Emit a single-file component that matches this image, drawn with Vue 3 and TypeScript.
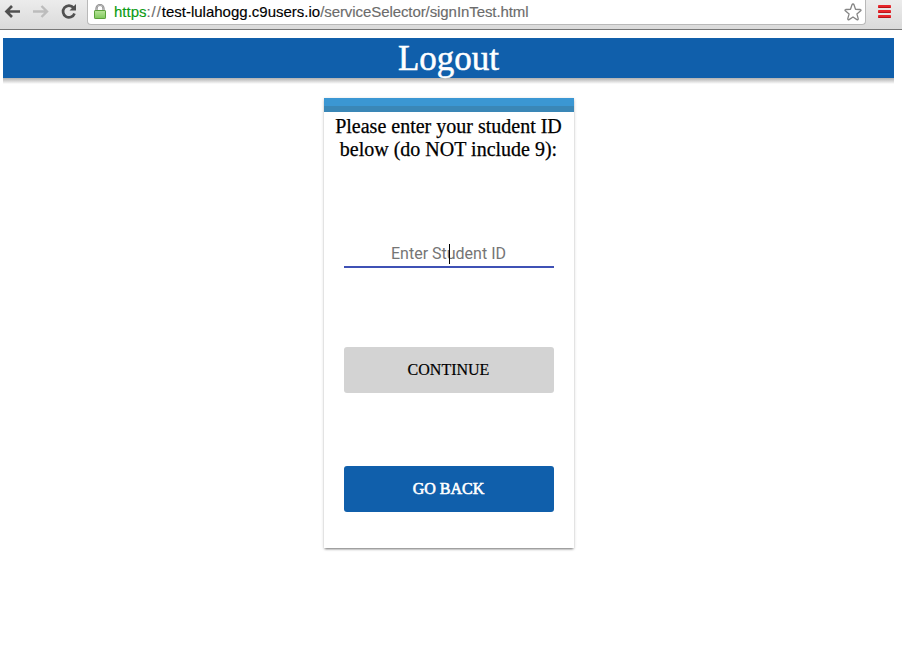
<script setup lang="ts">
import { ref } from 'vue'

const prompt = ['Please enter your student ID', 'below (do NOT include 9):']
const placeholder = ref<string>('Enter Student ID')
</script>

<template>
  <div class="window">
    <div class="toolbar">
      <svg class="nav" width="86" height="29" viewBox="0 0 86 29" fill="none">
        <path d="M20 11.5H7M12 6L6.5 11.5L12 17" stroke="#505050" stroke-width="2.7" />
        <path d="M33 11.5H46.500M41.500 6L47 11.500L41.500 17" stroke="#bcbcbc" stroke-width="2.4" />
        <path d="M73.500 7.700A5.900 5.900 0 1 0 74.500 13.500" stroke="#505050" stroke-width="2.7" />
        <path d="M76 4V10.500H69.500Z" fill="#505050" />
      </svg>
      <div class="address">
        <svg class="lock" width="14" height="18" viewBox="0 0 14 18">
          <defs>
            <linearGradient id="lockFill" x1="0" y1="0" x2="0" y2="1">
              <stop offset="0" stop-color="#b9e49a" />
              <stop offset="1" stop-color="#7fc95c" />
            </linearGradient>
          </defs>
          <path d="M3.500 9V5.500a3.500 3.500 0 0 1 7 0V9" fill="none" stroke="#858585" stroke-width="2.200" />
          <path d="M3.500 9V5.500a3.500 3.500 0 0 1 7 0V9" fill="none" stroke="#d0d0d0" stroke-width=".7" />
          <rect x="1.500" y="7.500" width="11" height="8" rx=".6" fill="url(#lockFill)" stroke="#5aa13a" />
        </svg>
        <span class="url"><span class="scheme">https</span><span class="separator">://</span><span class="host">test-lulahogg.c9users.io</span><span class="path">/serviceSelector/signInTest.html</span></span>
        <svg class="star" width="20" height="20" viewBox="0 0 20 20">
          <path d="M10 2Q10.700 2 11 2.800L12.500 7.300L17.300 7.500Q18.600 7.900 17.700 8.800L13.900 11.900L15.200 16.700Q15.200 18.100 13.900 17.600L10 15L6.100 17.600Q4.800 18.100 4.800 16.700L6.100 11.900L2.300 8.800Q1.400 7.900 2.700 7.500L7.500 7.300L9 2.800Q9.300 2 10 2Z" fill="#fff" stroke="#858585" stroke-width="1.300" stroke-linejoin="round" />
        </svg>
      </div>
      <svg class="menu" width="15" height="15" viewBox="0 0 15 15">
        <g fill="#e8262b">
          <rect x="1" y="1" width="13" height="3" rx=".8" />
          <rect x="1" y="6" width="13" height="3" rx=".8" />
          <rect x="1" y="11" width="13" height="3" rx=".8" />
        </g>
        <path d="M1.500 3.500h12M1.500 8.500h12M1.500 13.500h12" stroke="#b8141a" />
      </svg>
    </div>
    <header class="banner">Logout</header>
    <div class="banner-shadow"></div>
    <main class="card">
      <div class="strip"></div>
      <p class="prompt"><span v-for="line in prompt" :key="line">{{ line }}</span></p>
      <div class="field">
        <span>{{ placeholder }}</span>
        <i class="caret"></i>
      </div>
      <button class="btn continue" type="button">CONTINUE</button>
      <button class="btn back" type="button">GO BACK</button>
    </main>
  </div>
</template>

<style scoped>
.window {
  width: 902px;
  height: 653px;
  overflow: hidden;
  background: #fff;
  font-family: "Liberation Serif", "Times New Roman", serif;
}
.toolbar {
  box-sizing: border-box;
  height: 30px;
  display: flex;
  align-items: flex-start;
  background: linear-gradient(#ececec, #dadada);
  border-bottom: 1px solid #777;
}
.nav {
  flex: none;
}
.address {
  box-sizing: border-box;
  width: 779px;
  height: 25px;
  margin-left: 1px;
  padding-left: 5px;
  display: flex;
  align-items: flex-start;
  background: #fff;
  border: 1px solid #b9b9b9;
  border-top: 0;
  border-radius: 0 0 4px 4px;
  font-family: "Liberation Sans", Arial, sans-serif;
}
.lock {
  margin-top: 3px;
}
.url {
  margin-left: 7px;
  font-size: 15px;
  line-height: 24px;
  color: #6b6b6b;
  white-space: nowrap;
  -webkit-text-stroke: 0.15px currentColor;
}
.scheme {
  color: #0a9b13;
}
.separator {
  letter-spacing: 0.9px;
}
.host {
  color: #000;
}
.path {
  letter-spacing: -0.08px;
}
.star {
  margin: 2px 2px 0 auto;
}
.menu {
  margin: 4px 0 0 11px;
}
.banner {
  width: 891px;
  height: 40px;
  margin: 8px 0 0 3px;
  background: #105fab;
  color: #fff;
  font-size: 35px;
  line-height: 41px;
  text-align: center;
  -webkit-text-stroke: 0.5px #fff;
}
.banner-shadow {
  width: 891px;
  height: 6px;
  margin-left: 3px;
  background: linear-gradient(#b0b0b0, #d2d2d2 45%, #fff);
}
.card {
  width: 250px;
  height: 450px;
  margin: 14px 0 0 324px;
  display: flex;
  flex-direction: column;
  align-items: center;
  background: #fff;
  box-shadow: 0 1px 3px rgba(0, 0, 0, 0.22), 0 2px 2px -1px rgba(0, 0, 0, 0.4);
}
.strip {
  box-sizing: border-box;
  width: 250px;
  height: 14px;
  background: #3b97d3;
  border-bottom: 6px solid #3a87b7;
}
.prompt {
  margin: 3px 1px 0 0;
  font-size: 20px;
  line-height: 23px;
  text-align: center;
  color: #000;
  -webkit-text-stroke: 0.25px #000;
}
.prompt span {
  display: block;
  white-space: nowrap;
}
.field {
  position: relative;
  box-sizing: border-box;
  width: 210px;
  height: 28px;
  margin-top: 79px;
  padding-right: 1px;
  border-bottom: 2px solid #3f51b5;
  font: 16px/27px Roboto, sans-serif;
  color: #757575;
  text-align: center;
}
.caret {
  position: absolute;
  left: 105px;
  top: 4px;
  width: 1px;
  height: 20px;
  background: #000;
}
.btn {
  width: 210px;
  height: 46px;
  padding: 0 1px 0 0;
  border: 0;
  border-radius: 3px;
  font-family: inherit;
  font-size: 16px;
  line-height: 46px;
}
.continue {
  margin-top: 79px;
  background: #d3d3d3;
  color: #000;
  -webkit-text-stroke: 0.2px #000;
}
.back {
  margin-top: 73px;
  background: #105fab;
  color: #fff;
  -webkit-text-stroke: 0.6px #fff;
}
</style>

<style>
body {
  margin: 0;
  background: #fff;
}
</style>
